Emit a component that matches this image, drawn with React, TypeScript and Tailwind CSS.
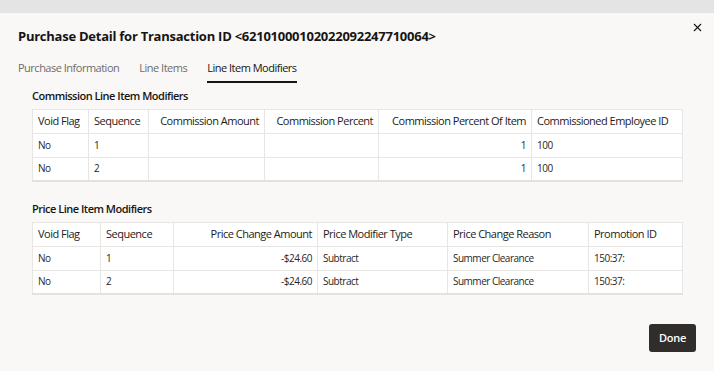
import { X } from "lucide-react";

type Col = { label: string; width: number; align?: "left" | "right" };

const commissionCols: Col[] = [
  { label: "Void Flag", width: 56 },
  { label: "Sequence", width: 60 },
  { label: "Commission Amount", width: 116, align: "right" },
  { label: "Commission Percent", width: 114, align: "right" },
  { label: "Commission Percent Of Item", width: 153, align: "right" },
  { label: "Commissioned Employee ID", width: 151 },
];

const commissionRows = [
  ["No", "1", "", "", "1", "100"],
  ["No", "2", "", "", "1", "100"],
];

const priceCols: Col[] = [
  { label: "Void Flag", width: 68 },
  { label: "Sequence", width: 73 },
  { label: "Price Change Amount", width: 144, align: "right" },
  { label: "Price Modifier Type", width: 130 },
  { label: "Price Change Reason", width: 141 },
  { label: "Promotion ID", width: 94 },
];

const priceRows = [
  ["No", "1", "-$24.60", "Subtract", "Summer Clearance", "150:37:"],
  ["No", "2", "-$24.60", "Subtract", "Summer Clearance", "150:37:"],
];

function DataTable({ cols, rows }: { cols: Col[]; rows: string[][] }) {
  return (
    <table className="w-[650px] table-fixed border-collapse border-b-2 border-[#e4e2e0] bg-white">
      <colgroup>
        {cols.map((c) => (
          <col key={c.label} style={{ width: c.width }} />
        ))}
      </colgroup>
      <thead>
        <tr className="h-6">
          {cols.map((c) => (
            <th
              key={c.label}
              className={`whitespace-nowrap border border-[#e8e6e4] px-[5px] text-[11px] font-normal tracking-[-0.5px] text-[#1d1b19] ${
                c.align === "right" ? "text-right" : "text-left"
              }`}
            >
              {c.label}
            </th>
          ))}
        </tr>
      </thead>
      <tbody>
        {rows.map((r, i) => (
          <tr key={i} className="h-6">
            {r.map((v, j) => (
              <td
                key={j}
                className={`whitespace-nowrap border border-[#e8e6e4] px-[5px] text-[10px] tracking-[-0.5px] text-[#2a2624] ${
                  cols[j].align === "right" ? "text-right" : "text-left"
                }`}
              >
                {v}
              </td>
            ))}
          </tr>
        ))}
      </tbody>
    </table>
  );
}

export default function App() {
  return (
    <div
      className="flex h-[371px] w-[714px] flex-col overflow-hidden bg-[#e4e4e4]"
      style={{ fontFamily: '"Open Sans", "Noto Sans", sans-serif' }}
    >
      <div className="mt-[13px] flex flex-1 flex-col bg-[#f9f8f7]">
        {/* header */}
        <div className="flex items-start justify-between pl-[18px] pr-[10px] pt-[14px]">
          <h1 className="text-[13px] font-bold tracking-[-0.25px] text-[#161513]">
            Purchase Detail for Transaction ID &lt;62101000102022092247710064&gt;
          </h1>
          <button type="button" className="-mt-[6px] text-[#161513]">
            <X size={13} strokeWidth={2} />
          </button>
        </div>

        {/* tabs */}
        <nav className="mt-[13px] flex gap-[20px] pl-[18px] text-[11px] tracking-[-0.5px]">
          <span className="pb-[7px] text-[#6f6c69]">Purchase Information</span>
          <span className="pb-[7px] text-[#6f6c69]">Line Items</span>
          <span className="border-b-2 border-[#161513] pb-[5px] text-[#161513]">
            Line Item Modifiers
          </span>
        </nav>

        <main className="flex flex-col pl-[32px]">
          <h2 className="mt-[5px] text-[11px] font-semibold tracking-[-0.5px] text-[#161513]">
            Commission Line Item Modifiers
          </h2>
          <div className="mt-[4px]">
            <DataTable cols={commissionCols} rows={commissionRows} />
          </div>

          <h2 className="mt-[19px] text-[11px] font-semibold tracking-[-0.5px] text-[#161513]">
            Price Line Item Modifiers
          </h2>
          <div className="mt-[4px]">
            <DataTable cols={priceCols} rows={priceRows} />
          </div>
        </main>

        <div className="mt-[29px] flex justify-end pr-[18px]">
          <button
            type="button"
            className="h-7 w-[47px] rounded-[3px] bg-[#312d2a] text-[11px] font-semibold tracking-[-0.3px] text-white"
          >
            Done
          </button>
        </div>
      </div>
    </div>
  );
}
